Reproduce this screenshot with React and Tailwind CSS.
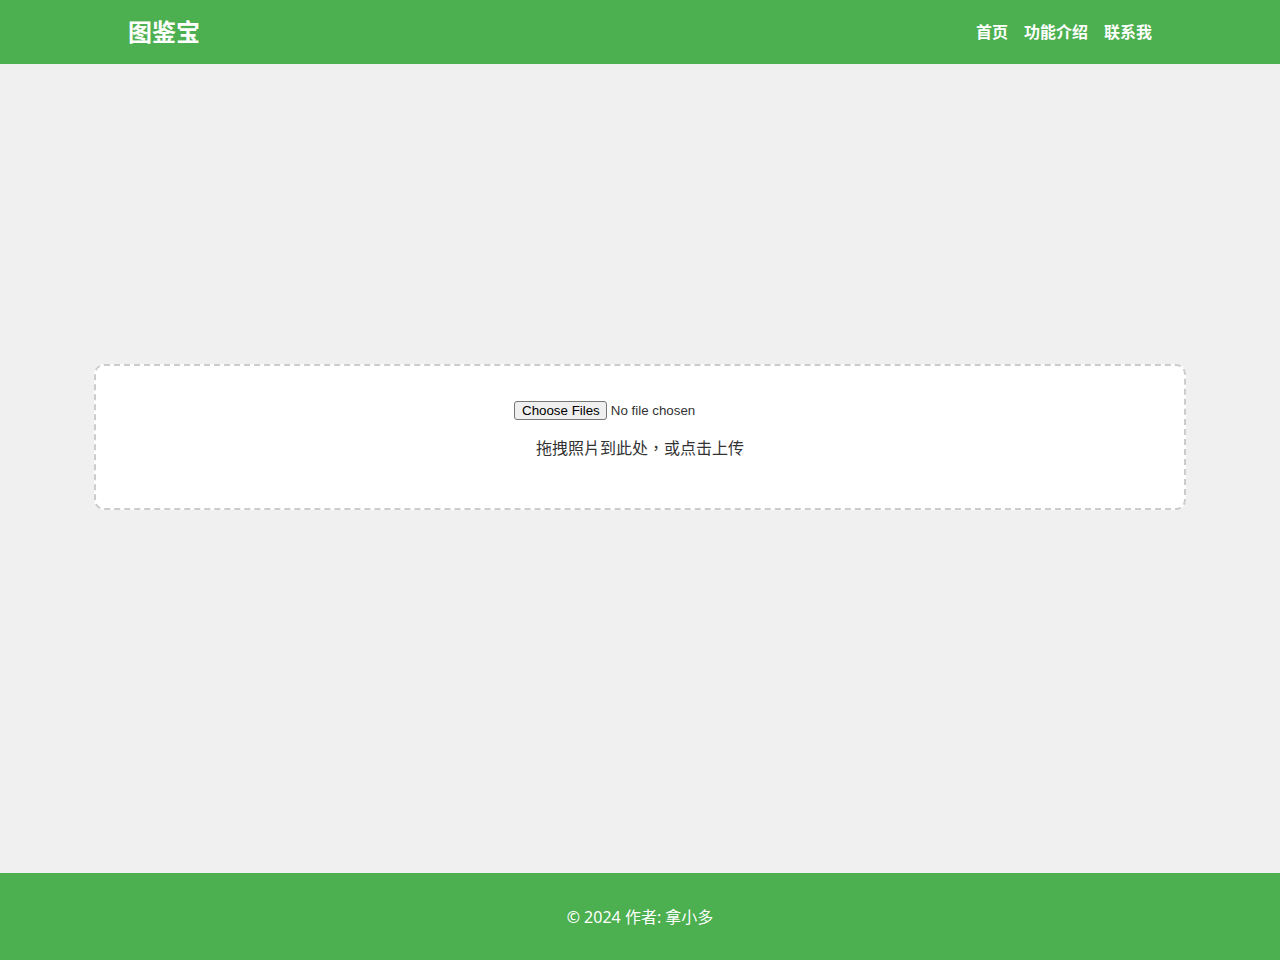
import React from "react";

export default function App() {
  return (
    <div className="min-h-[960px] flex flex-col bg-[#f0f0f0]" style={{ fontFamily: '"Noto Sans", "Noto Sans CJK SC", sans-serif' }}>
      <header className="h-16 bg-[#4caf50] text-white">
        <div className="h-full px-32 flex items-center justify-between">
          <div className="text-2xl font-bold leading-none">图鉴宝</div>
          <nav className="flex gap-4 text-base font-bold">
            <a href="#" className="text-white">首页</a>
            <a href="#" className="text-white">功能介绍</a>
            <a href="#" className="text-white">联系我</a>
          </nav>
        </div>
      </header>
      <main className="flex-1 pt-[300px]">
        <div className="mx-auto w-[1092px] bg-white border-2 border-dashed border-[#cccccc] rounded-[10px] pt-[35px] pb-8 flex flex-col items-center">
          <input
            type="file"
            multiple
            className="w-[252px] text-[13.33px] leading-[normal] text-[#333] file:mr-[4px] file:pl-[7px] file:pr-[6px] file:py-[1px] file:bg-[#efefef] file:border file:border-solid file:border-[#767676] file:rounded-[3px] file:text-black file:text-[13.33px]"
            style={{ fontFamily: 'Arial, "Liberation Sans", sans-serif' }}
          />
          <p
            className="mt-[16px] mb-4 text-base leading-6 text-[#333]"
            style={{ fontFamily: '"Noto Sans", "Noto Sans CJK TC", sans-serif' }}
          >
            拖拽照片到此处，或点击上传
          </p>
        </div>
      </main>
      <footer className="h-[87px] bg-[#4caf50] flex items-center justify-center text-white text-base">
        © 2024 作者: 拿小多
      </footer>
    </div>
  );
}
